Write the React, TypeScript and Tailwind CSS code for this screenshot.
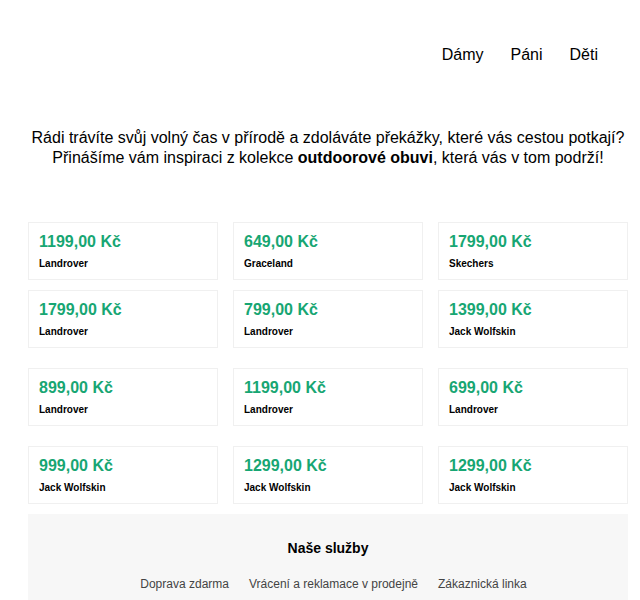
const products = [
  { price: "1199,00 Kč", brand: "Landrover" },
  { price: "649,00 Kč", brand: "Graceland" },
  { price: "1799,00 Kč", brand: "Skechers" },
  { price: "1799,00 Kč", brand: "Landrover" },
  { price: "799,00 Kč", brand: "Landrover" },
  { price: "1399,00 Kč", brand: "Jack Wolfskin" },
  { price: "899,00 Kč", brand: "Landrover" },
  { price: "1199,00 Kč", brand: "Landrover" },
  { price: "699,00 Kč", brand: "Landrover" },
  { price: "999,00 Kč", brand: "Jack Wolfskin" },
  { price: "1299,00 Kč", brand: "Jack Wolfskin" },
  { price: "1299,00 Kč", brand: "Jack Wolfskin" },
];

function ProductCard({ price, brand }: { price: string; brand: string }) {
  return (
    <div className="h-[58px] border border-[#f0f0f0] bg-white px-[10px] pt-[9px]">
      <div className="text-[16px] leading-[20px] font-bold text-[#17a673]">{price}</div>
      <div className="mt-[5px] text-[10px] leading-[14px] font-bold text-black">{brand}</div>
    </div>
  );
}

export default function App() {
  const rows = [0, 1, 2, 3].map((r) => products.slice(r * 3, r * 3 + 3));
  return (
    <div className="min-h-[600px] bg-white font-['Liberation_Sans',Arial,sans-serif] text-black">
      {/* Top nav */}
      <nav className="flex justify-end gap-[27px] pt-[45px] pr-[42px] text-[16px] leading-[20px]">
        <a>Dámy</a>
        <a>Páni</a>
        <a>Děti</a>
      </nav>

      <div className="ml-[28px] w-[600px]">
        {/* Intro */}
        <p className="mt-[63px] text-center text-[16px] leading-[20px]">
          Rádi trávíte svůj volný čas v přírodě a zdoláváte překážky, které vás cestou potkají?
          <br />
          Přinášíme vám inspiraci z kolekce <strong>outdoorové obuvi</strong>, která vás v tom podrží!
        </p>

        {/* Products */}
        <div className="mt-[54px] flex flex-col">
          {rows.map((row, i) => (
            <div
              key={i}
              className={`grid grid-cols-3 gap-[15px] ${i === 1 ? "mt-[10px]" : i > 1 ? "mt-[20px]" : ""}`}
            >
              {row.map((p, j) => (
                <ProductCard key={j} price={p.price} brand={p.brand} />
              ))}
            </div>
          ))}
        </div>

        {/* Services */}
        <section className="mt-[10px] bg-[#f7f7f7] pt-[24px] pb-[10px] text-center">
          <h2 className="text-[14px] leading-[20px] font-bold">Naše služby</h2>
          <div className="mt-[18px] flex justify-center gap-[20px] pl-[11px] text-[12px] leading-[16px] text-[#444]">
            <a>Doprava zdarma</a>
            <a>Vrácení a reklamace v prodejně</a>
            <a>Zákaznická linka</a>
          </div>
        </section>
      </div>
    </div>
  );
}
